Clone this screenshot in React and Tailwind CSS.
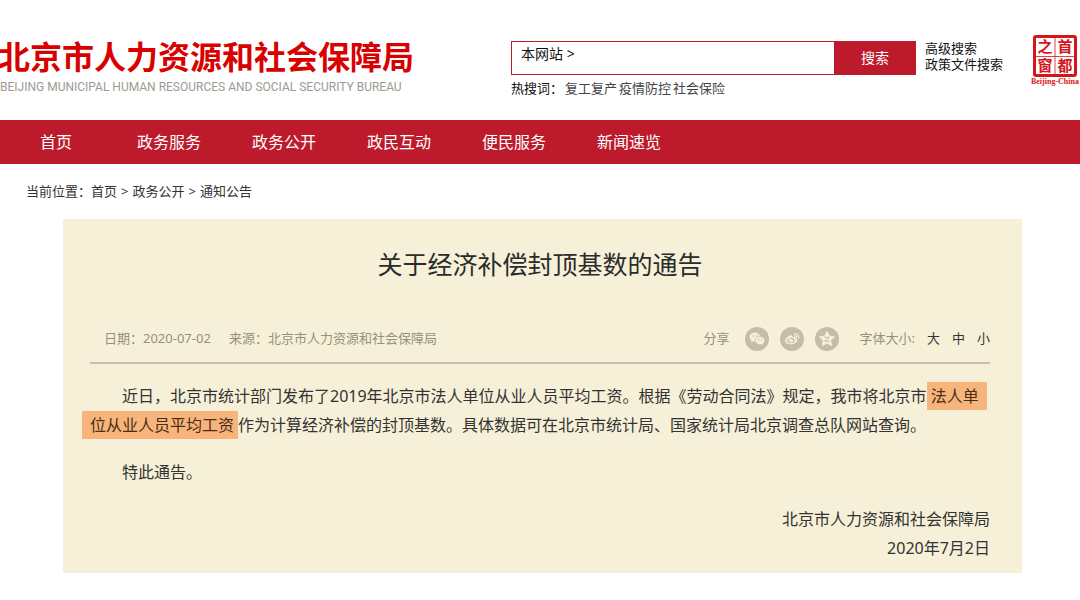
import { clsx } from "clsx";

const NAV_ITEMS = ["政务服务", "政务公开", "政民互动", "便民服务", "新闻速览"];

const HOT_WORDS = ["复工复产", "疫情防控", "社会保险"];

const FONT_SIZES = ["大", "中", "小"];

function Seal() {
  return (
    <a href="#" aria-label="首都之窗" className="mt-[34px] ml-auto block shrink-0">
      <svg viewBox="0 0 50 52" className="block h-[52px] w-[50px]">
        <rect x="4.5" y="2.5" width="41" height="39" rx="1.5" fill="#fff" stroke="#d7141a" strokeWidth="3" />
        <path d="M25 4v37M6 22.5h38" stroke="#d7141a" strokeWidth="1" opacity=".8" fill="none" />
        <g fill="#d7141a" fontFamily="'Noto Sans CJK SC', sans-serif" fontSize="15" fontWeight="700" textAnchor="middle">
          <text x="15" y="18">之</text>
          <text x="35" y="18">首</text>
          <text x="15" y="37">窗</text>
          <text x="35" y="37">都</text>
        </g>
        <text x="25" y="50" fill="#d7141a" fontFamily="'Liberation Serif', serif" fontSize="8" fontWeight="700" textAnchor="middle">
          Beijing-China
        </text>
      </svg>
    </a>
  );
}

function Header() {
  return (
    <header className="flex h-[120px] items-start">
      <a href="#" className="w-[511px] shrink-0 pt-[39px] whitespace-nowrap">
        <span className="-ml-0.5 block text-[32px] leading-9 font-bold text-[#d90000]">北京市人力资源和社会保障局</span>
        <span className="mt-1 block font-[Roboto,sans-serif] text-[12px] leading-4 text-[#9c9a92]">
          BEIJING MUNICIPAL HUMAN RESOURCES AND SOCIAL SECURITY BUREAU
        </span>
      </a>

      <div className="w-[405px] shrink-0 pt-[41px]">
        <form className="flex h-[34px]" onSubmit={(e) => e.preventDefault()}>
          <label className="flex min-w-0 flex-1 border border-r-0 border-[#bd1a2c] pl-[9px] text-sm">
            <span className="leading-6">本网站 &gt;</span>
            <input type="text" aria-label="搜索关键词" className="min-w-0 flex-1 px-2 outline-none" />
          </label>
          <button type="submit" className="w-[82px] bg-[#bd1a2c] text-sm text-white">
            搜索
          </button>
        </form>
        <p className="mt-[3px] flex gap-0.5 text-[13px] leading-5">
          <span>热搜词：</span>
          {HOT_WORDS.map((word) => (
            <a key={word} href="#" className="text-[#444]">
              {word}
            </a>
          ))}
        </p>
      </div>

      <div className="ml-[9px] shrink-0 pt-10 text-[13px] leading-4">
        <a href="#" className="block">高级搜索</a>
        <a href="#" className="block">政策文件搜索</a>
      </div>

      <Seal />
    </header>
  );
}

function WechatIcon() {
  return (
    <svg viewBox="0 0 24 24" className="block size-6">
      <circle cx="12" cy="12" r="12" fill="#c5bda9" />
      <ellipse cx="9.800" cy="9.900" rx="5.200" ry="4.400" fill="#f6f0d8" />
      <path d="M6.800 13l-.8 2.600L9 14z" fill="#f6f0d8" />
      <ellipse cx="15" cy="13.600" rx="4.800" ry="4" fill="#f6f0d8" stroke="#c5bda9" strokeWidth=".6" />
      <path d="M16.500 16.500l1.700 1.600-.2-2.600z" fill="#f6f0d8" />
      <g fill="#c5bda9">
        <circle cx="8.200" cy="9" r=".8" />
        <circle cx="11.600" cy="9" r=".8" />
        <circle cx="13.500" cy="12.800" r=".7" />
        <circle cx="16.500" cy="12.800" r=".7" />
      </g>
    </svg>
  );
}

function WeiboIcon() {
  return (
    <svg viewBox="0 0 24 24" className="block size-6">
      <circle cx="12" cy="12" r="12" fill="#c5bda9" />
      <path
        d="M10.800 8.200c-2.500.4-5.800 3.500-5.800 5.800 0 2 2.600 3.300 5.700 3.300 3.800 0 6.600-2 6.600-4 0-1.200-.9-1.800-1.800-2 .4-1.500-.9-2-3.200-1.200.3-1.200-.2-2.100-1.500-1.900z"
        fill="#f6f0d8"
      />
      <ellipse cx="10.800" cy="13.600" rx="3.900" ry="2.700" fill="#c5bda9" transform="rotate(-8 10.800 13.600)" />
      <ellipse cx="10.600" cy="13.800" rx="2.500" ry="2" fill="#f6f0d8" />
      <circle cx="10.100" cy="14.200" r=".8" fill="#c5bda9" />
      <path d="M14.300 6.900c2.900-.7 5.200 1.600 4.300 4.400M14.700 8.900c1.400-.3 2.300.6 1.900 1.900" fill="none" stroke="#f6f0d8" strokeWidth="1.100" strokeLinecap="round" />
    </svg>
  );
}

function QzoneIcon() {
  return (
    <svg viewBox="0 0 24 24" className="block size-6">
      <circle cx="12" cy="12" r="12" fill="#c5bda9" />
      <path
        d="M12 4.200l2.300 4.900 5.400.7-4 3.700 1.100 5.300-4.800-2.600-4.800 2.600 1.100-5.300-4-3.700 5.400-.7z"
        fill="#f6f0d8"
        stroke="#f6f0d8"
        strokeWidth=".8"
        strokeLinejoin="round"
      />
      <path d="M9.300 10.300h5l-4.500 3.800c1.700.3 3.200.3 4.700 0" fill="none" stroke="#c5bda9" strokeWidth="1" />
    </svg>
  );
}

const SHARE_LINKS = [
  { label: "微信", icon: WechatIcon },
  { label: "微博", icon: WeiboIcon },
  { label: "QQ空间", icon: QzoneIcon },
];

function ArticleMeta() {
  return (
    <div className="flex h-12 items-center border-b-2 border-[#c5bda9] pl-[14px] text-[13px] text-[#96917f]">
      <span>日期：2020-07-02</span>
      <span className="ml-[18px]">来源：北京市人力资源和社会保障局</span>
      <span className="ml-auto">分享</span>
      <div className="ml-4 flex gap-[11px]">
        {SHARE_LINKS.map(({ label, icon: Icon }) => (
          <a key={label} href="#" aria-label={label}>
            <Icon />
          </a>
        ))}
      </div>
      <span className="ml-5">字体大小:</span>
      <div className="ml-3 flex gap-3">
        {FONT_SIZES.map((size) => (
          <button key={size} type="button" className="text-[#333]">
            {size}
          </button>
        ))}
      </div>
    </div>
  );
}

function Highlight({ className, children }) {
  return <mark className={clsx("bg-[#f8b57b] py-[3px] text-[#4a2d18]", className)}>{children}</mark>;
}

export default function App() {
  return (
    <div className="min-h-screen bg-white pb-6 font-['Noto_Sans','Noto_Sans_CJK_SC',sans-serif] text-[#111]" lang="zh-CN">
      <Header />

      <nav className="flex h-11 items-center bg-[#bd1a2c] pl-10 text-base text-white">
        <a href="#" className="mr-[65px]">首页</a>
        <div className="flex gap-[51px]">
          {NAV_ITEMS.map((item) => (
            <a key={item} href="#">
              {item}
            </a>
          ))}
        </div>
      </nav>

      <div className="flex h-[55px] items-center gap-1 pl-[26px] text-[13px] text-[#333]">
        <span className="-mr-1">当前位置：</span>
        <a href="#">首页</a>
        <span>&gt;</span>
        <a href="#">政务公开</a>
        <span>&gt;</span>
        <a href="#">通知公告</a>
      </div>

      <article className="mr-[58px] ml-[63px] bg-[#f6f0d8] pr-8 pb-2.5 pl-[27px] text-[#333]">
        <h1 className="pt-[27px] text-center text-[25px] leading-9 text-[#2b2b2b]">关于经济补偿封顶基数的通告</h1>

        <div className="mt-[34px]">
          <ArticleMeta />
        </div>

        <div className="mt-[18px] text-base leading-[29px]">
          <p className="indent-8">
            近日，北京市统计部门发布了2019年北京市法人单位从业人员平均工资。根据《劳动合同法》规定，我市将北京市
            <Highlight className="pr-2 pl-1">法人单</Highlight>
            <br />
            <Highlight className="-ml-2 pr-1 pl-2">位从业人员平均工资</Highlight>
            作为计算经济补偿的封顶基数。具体数据可在北京市统计局、国家统计局北京调查总队网站查询。
          </p>
          <p className="mt-[18px] indent-8">特此通告。</p>
          <p className="mt-[18px] text-right">
            北京市人力资源和社会保障局
            <br />
            2020年7月2日
          </p>
        </div>
      </article>
    </div>
  );
}
